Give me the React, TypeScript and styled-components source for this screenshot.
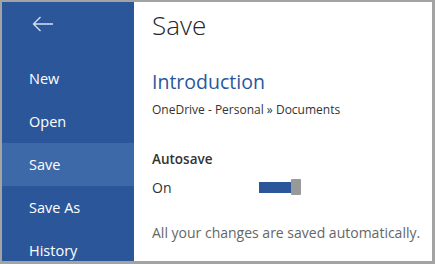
import styled, { createGlobalStyle } from "styled-components";

const GlobalStyle = createGlobalStyle`
  html, body {
    margin: 0;
    padding: 0;
    background: #a3a3a3;
  }
  body {
    font-family: "Open Sans", "Noto Sans", sans-serif;
  }
`;

const Frame = styled.div`
  width: 435px;
  height: 264px;
  box-sizing: border-box;
  padding: 2px 3px 3px 2px;
  background: #a3a3a3;
`;

const Window = styled.div`
  display: grid;
  grid-template-columns: 132px 1fr;
  height: 100%;
  background: #ffffff;
  overflow: hidden;
`;

const Sidebar = styled.nav`
  display: flex;
  flex-direction: column;
  background: #2b579a;
`;

const BackButton = styled.button`
  display: flex;
  align-items: center;
  height: 44px;
  padding: 0 0 0 30px;
  margin-bottom: 11px;
  border: 0;
  background: transparent;
  cursor: pointer;
`;

const NavItem = styled.div<{ $active?: boolean }>`
  display: flex;
  align-items: center;
  height: 43px;
  padding-left: 27px;
  color: #ffffff;
  font-size: 14.5px;
  background: ${(p) => (p.$active ? "#3e69a9" : "transparent")};
`;

const Content = styled.main`
  display: flex;
  flex-direction: column;
  padding: 3px 0 0 18px;
  color: #222;
`;

const Title = styled.h1`
  margin: 0;
  font-size: 26px;
  font-weight: 300;
  line-height: 40px;
  color: #262626;
`;

const DocName = styled.h2`
  margin: 23px 0 0;
  font-size: 19.5px;
  font-weight: 400;
  line-height: 28px;
  color: #2b579a;
`;

const Path = styled.div`
  margin-top: 5px;
  font-size: 12px;
  line-height: 18px;
  color: #333;
`;

const Label = styled.div`
  margin-top: 30px;
  font-size: 13.5px;
  font-weight: 600;
  line-height: 20px;
  color: #333;
`;

const ToggleRow = styled.div`
  display: flex;
  align-items: center;
  margin-top: 8px;
  height: 20px;
`;

const ToggleText = styled.span`
  width: 107px;
  font-size: 14px;
  color: #333;
`;

const Toggle = styled.div`
  display: flex;
  align-items: center;
`;

const Track = styled.div`
  width: 32px;
  height: 11px;
  background: #2b579a;
`;

const Thumb = styled.div`
  width: 10px;
  height: 16px;
  background: #999;
  border-radius: 1px;
`;

const Note = styled.p`
  margin: 26px 0 0;
  font-size: 14px;
  line-height: 20px;
  color: #666;
  white-space: nowrap;
`;

export default function App() {
  const items = ["New", "Open", "Save", "Save As", "History"];
  return (
    <>
      <GlobalStyle />
      <Frame>
        <Window>
          <Sidebar>
            <BackButton aria-label="Back">
              <svg width="22" height="16" viewBox="0 0 22 16">
                <path
                  d="M21 8H1.5M8.5 1L1.5 8l7 7"
                  fill="none"
                  stroke="#d6e0ef"
                  strokeWidth="1.3"
                />
              </svg>
            </BackButton>
            {items.map((item) => (
              <NavItem key={item} $active={item === "Save"}>
                {item}
              </NavItem>
            ))}
          </Sidebar>
          <Content>
            <Title>Save</Title>
            <DocName>Introduction</DocName>
            <Path>OneDrive - Personal » Documents</Path>
            <Label>Autosave</Label>
            <ToggleRow>
              <ToggleText>On</ToggleText>
              <Toggle>
                <Track />
                <Thumb />
              </Toggle>
            </ToggleRow>
            <Note>All your changes are saved automatically.</Note>
          </Content>
        </Window>
      </Frame>
    </>
  );
}
